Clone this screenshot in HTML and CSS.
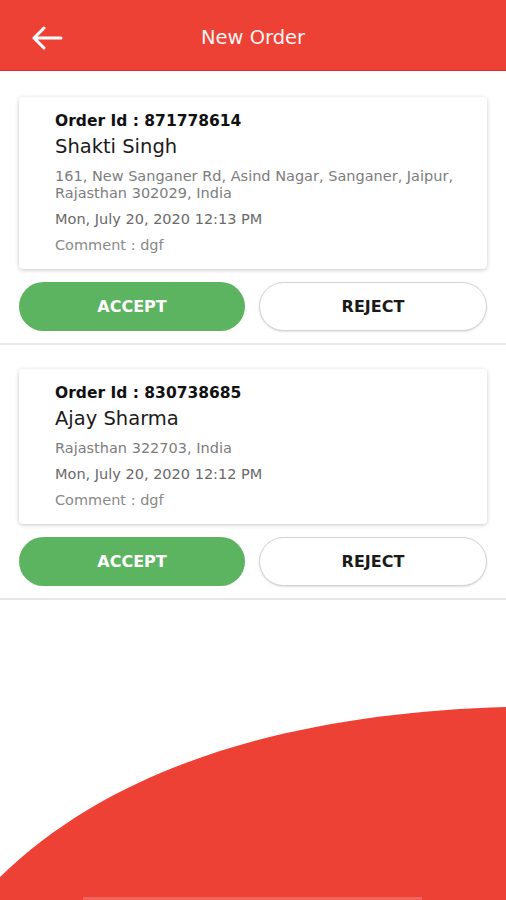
FILE: index.html
```html
<!DOCTYPE html>
<html lang="en">
  <head>
    <meta charset="UTF-8" />
    <meta name="viewport" content="width=device-width, initial-scale=1.0" />
    <title>New Order</title>
    <link rel="stylesheet" href="styles.css">
  </head>
  <body>
    <div class="screen">
      <header class="topbar">
        <span class="back">
          <svg width="32" height="24" viewBox="0 0 32 24">
            <path d="M3 12H30M13 2L3 12L13 22" fill="none" stroke="#fff" stroke-width="3" stroke-linecap="round" stroke-linejoin="round"/>
          </svg>
        </span>
        <h1 class="title">New Order</h1>
      </header>

      <div class="orders">
        <div class="order">
          <div class="card">
            <div class="order-id">Order Id : 871778614</div>
            <div class="name">Shakti Singh</div>
            <div class="address">161, New Sanganer Rd, Asind Nagar, Sanganer, Jaipur, Rajasthan 302029, India</div>
            <div class="date">Mon, July 20, 2020 12:13 PM</div>
            <div class="comment">Comment : dgf</div>
          </div>
          <div class="actions">
            <button class="btn accept">ACCEPT</button>
            <button class="btn reject">REJECT</button>
          </div>
        </div>

        <div class="order">
          <div class="card">
            <div class="order-id">Order Id : 830738685</div>
            <div class="name">Ajay Sharma</div>
            <div class="address">Rajasthan 322703, India</div>
            <div class="date">Mon, July 20, 2020 12:12 PM</div>
            <div class="comment">Comment : dgf</div>
          </div>
          <div class="actions">
            <button class="btn accept">ACCEPT</button>
            <button class="btn reject">REJECT</button>
          </div>
        </div>
      </div>

      <!-- bottom decoration -->
      <svg class="wave" width="506" height="200" viewBox="0 700 506 200">
        <path d="M0 877C130 750 330 712 506 707L506 900L0 900Z" fill="#ee4136"/>
        <rect x="83" y="897" width="339" height="3" fill="#f0645b"/>
      </svg>
    </div>
  </body>
</html>
```

FILE: styles.css
```css
body {
  margin: 0;
  font-family: "DejaVu Sans", "Liberation Sans", sans-serif;
  background-color: #fff;
}

.screen {
  position: relative;
  width: 506px;
  height: 900px;
  overflow: hidden;
}

/* Header */
.topbar {
  height: 66px;
  padding-top: 4px;
  background-color: #ee4136;
  border-bottom: 1px solid #d93127;
  display: flex;
  align-items: center;
  justify-content: center;
  position: relative;
}

.back {
  position: absolute;
  left: 31px;
  top: 26px;
  display: flex;
}

.title {
  margin: 0;
  color: #fdf3f2;
  font-size: 19.5px;
  font-weight: 400;
}

/* Orders list */
.order {
  padding: 26px 19px 12px;
  border-bottom: 2px solid #e8e8e8;
}

.order + .order {
  padding-top: 24px;
}

.card {
  background: #fff;
  border-radius: 4px;
  box-shadow: 0 1px 4px rgba(0, 0, 0, 0.22);
  padding: 14px 12px 15px 36px;
}

.order-id {
  font-size: 15.5px;
  font-weight: 700;
  line-height: 20px;
  color: #111;
}

.name {
  margin-top: 3px;
  font-size: 19.5px;
  line-height: 26px;
  color: #1a1a1a;
}

.address {
  margin-top: 8px;
  font-size: 14.5px;
  line-height: 17px;
  color: #7d7d7d;
}

.date {
  margin-top: 9px;
  font-size: 14.5px;
  line-height: 17px;
  color: #6a6a6a;
}

.comment {
  margin-top: 9px;
  font-size: 14.5px;
  line-height: 17px;
  color: #8a8a8a;
}

/* Buttons */
.actions {
  display: flex;
  gap: 14px;
  margin-top: 13px;
}

.btn {
  flex: 1;
  height: 49px;
  border-radius: 25px;
  font-family: inherit;
  font-size: 16px;
  font-weight: 700;
}

.accept {
  background-color: #5cb460;
  border: none;
  color: #fff;
}

.reject {
  background-color: #fff;
  border: 1.5px solid #d2d2d2;
  box-shadow: 0 1px 2px rgba(0, 0, 0, 0.12);
  color: #1a1a1a;
}

.wave {
  position: absolute;
  left: 0;
  bottom: 0;
  display: block;
}
```
